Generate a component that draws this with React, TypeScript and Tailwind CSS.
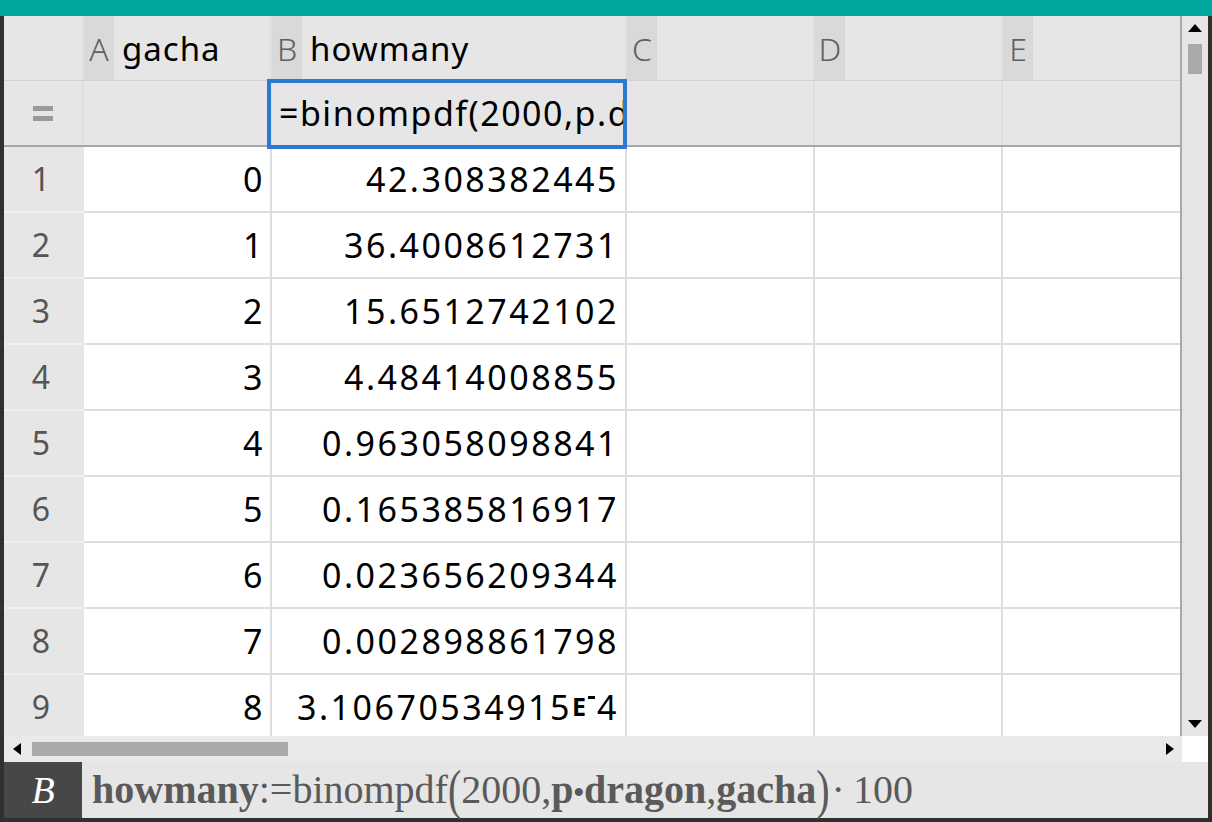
import React from "react";

const rows: [string, string, React.ReactNode][] = [
  ["1", "0", "42.308382445"],
  ["2", "1", "36.4008612731"],
  ["3", "2", "15.6512742102"],
  ["4", "3", "4.48414008855"],
  ["5", "4", "0.963058098841"],
  ["6", "5", "0.165385816917"],
  ["7", "6", "0.023656209344"],
  ["8", "7", "0.002898861798"],
  [
    "9",
    "8",
    <>
      3.10670534915
      <span className="text-[25px] font-bold tracking-[2px]">E</span>
      <span className="relative -top-[10px] mr-[2px] inline-block h-[3px] w-[7px] bg-black" />
      4
    </>,
  ],
];

const cols = [
  { letter: "A", name: "gacha", w: "w-[188px]" },
  { letter: "B", name: "howmany", w: "w-[355px]" },
  { letter: "C", name: "", w: "w-[188px]" },
  { letter: "D", name: "", w: "w-[188px]" },
  { letter: "E", name: "", w: "w-[177px]" },
];

function Tri({ dir }: { dir: "up" | "down" | "left" | "right" }) {
  const pts = {
    up: "0,8 7,0 14,8",
    down: "0,0 14,0 7,8",
    left: "8,0 8,12 0,6",
    right: "0,0 8,6 0,12",
  }[dir];
  const vert = dir === "up" || dir === "down";
  return (
    <svg width={vert ? 14 : 8} height={vert ? 8 : 12} viewBox={vert ? "0 0 14 8" : "0 0 8 12"}>
      <polygon points={pts} fill="#000" />
    </svg>
  );
}

export default function App() {
  return (
    <div className="flex h-[822px] w-[1212px] flex-col overflow-hidden bg-[#303030] font-['Noto_Sans',sans-serif]">
      <div className="h-[16px] shrink-0 bg-[#00a79d]" />
      <div className="flex min-h-0 flex-1 flex-col px-[4px] pb-[4px]">
        {/* grid + vertical scrollbar */}
        <div className="flex min-h-0 flex-1">
          <div className="flex min-w-0 flex-1 flex-col bg-white">
            {/* column header */}
            <div className="flex h-[65px] shrink-0 border-b border-[#d2d2d2] bg-[#e6e6e6]">
              <div className="w-[80px] shrink-0 border-r-2 border-[#dedede]" />
              {cols.map((c, i) => (
                <div
                  key={c.letter}
                  className={`flex shrink-0 items-center ${c.w} ${i < 4 ? "border-r-2 border-[#dedede]" : ""}`}
                >
                  <div className="flex h-full w-[30px] items-center justify-center bg-[#d9d9d9] pt-[2px] text-[32px] font-light text-[#606060]">
                    {c.letter}
                  </div>
                  <span className="ml-[8px] pt-[2px] text-[33px] tracking-[1px] text-black">{c.name}</span>
                </div>
              ))}
            </div>
            {/* formula row */}
            <div className="relative z-10 flex h-[66px] shrink-0 border-b-2 border-[#a6a6a6] bg-[#e6e6e6]">
              <div className="flex w-[80px] shrink-0 flex-col items-center justify-center gap-[5px] border-r-2 border-[#dedede]">
                <div className="h-[5px] w-[20px] bg-[#9a9a9a]" />
                <div className="h-[5px] w-[20px] bg-[#9a9a9a]" />
              </div>
              <div className="w-[188px] shrink-0 border-r-2 border-[#dedede]" />
              <div className="relative flex w-[355px] shrink-0 border-r-2 border-[#dedede]">
                <div className="flex w-full items-center overflow-hidden">
                  <span className="ml-[7px] whitespace-nowrap text-[34px] tracking-[1.5px] text-black">
                    =binompdf(2000,p.dragon,gacha)·100
                  </span>
                </div>
                <div className="absolute -left-[5px] -right-[2px] -top-[2px] -bottom-[4px] border-4 border-[#2b79d0]" />
              </div>
              <div className="w-[188px] shrink-0 border-r-2 border-[#dedede]" />
              <div className="w-[188px] shrink-0 border-r-2 border-[#dedede]" />
              <div className="w-[177px] shrink-0" />
            </div>
            {/* data rows */}
            <div className="min-h-0 flex-1 overflow-hidden">
              {rows.map(([n, a, b]) => (
                <div key={n} className="flex h-[66px]">
                  <div className="flex w-[80px] shrink-0 items-center justify-center border-b-2 border-[#efefef] bg-[#e6e6e6] pr-[6px] text-[32px] text-[#555]">
                    {n}
                  </div>
                  <div className="flex w-[188px] shrink-0 items-center justify-end border-b-2 border-r-2 border-[#dedede] pr-[5px] text-[34px] tracking-[2.5px] text-black">
                    {a}
                  </div>
                  <div className="flex w-[355px] shrink-0 items-center justify-end whitespace-nowrap border-b-2 border-r-2 border-[#dedede] pr-[6px] text-[34px] tracking-[2.5px] text-black">
                    {b}
                  </div>
                  <div className="w-[188px] shrink-0 border-b-2 border-r-2 border-[#dedede]" />
                  <div className="w-[188px] shrink-0 border-b-2 border-r-2 border-[#dedede]" />
                  <div className="w-[177px] shrink-0 border-b-2 border-[#dedede]" />
                </div>
              ))}
            </div>
          </div>
          {/* vertical scrollbar */}
          <div className="flex w-[28px] shrink-0 flex-col items-center border-l-2 border-[#a8a8a8] bg-[#e6e6e6] pt-[8px] pb-[8px]">
            <Tri dir="up" />
            <div className="mt-[12px] h-[30px] w-[14px] bg-[#a9a9a9]" />
            <div className="flex-1" />
            <Tri dir="down" />
          </div>
        </div>
        {/* horizontal scrollbar */}
        <div className="flex h-[26px] shrink-0 items-center bg-[#e8e9e9]">
          <div className="ml-[8px] flex w-[10px] justify-center">
            <Tri dir="left" />
          </div>
          <div className="ml-[10px] h-[14px] w-[256px] bg-[#a9a9a9]" />
          <div className="flex-1" />
          <Tri dir="right" />
          <div className="ml-[8px] h-full w-[26px] bg-white" />
        </div>
        {/* formula bar */}
        <div className="flex h-[56px] shrink-0 bg-[#e6e6e6]">
          <div className="flex w-[78px] shrink-0 items-center justify-center bg-[#474747] font-['Liberation_Serif',serif] text-[38px] italic text-white">
            B
          </div>
          <div className="ml-[10px] flex items-center whitespace-nowrap font-['Liberation_Serif',serif] text-[40px] text-[#5a5a5a]">
            <span className="font-bold">howmany</span>
            <span>:=binompdf</span>
            <span className="inline-block scale-y-[1.35] font-light">(</span>
            <span>2000,</span>
            <span className="font-bold">
              p<span className="relative -top-[1px] text-[30px]">•</span>dragon
            </span>
            <span>,</span>
            <span className="font-bold">gacha</span>
            <span className="inline-block scale-y-[1.35] font-light">)</span>
            <span className="ml-[2px]">·</span>
            <span className="ml-[8px]">100</span>
          </div>
        </div>
      </div>
    </div>
  );
}
